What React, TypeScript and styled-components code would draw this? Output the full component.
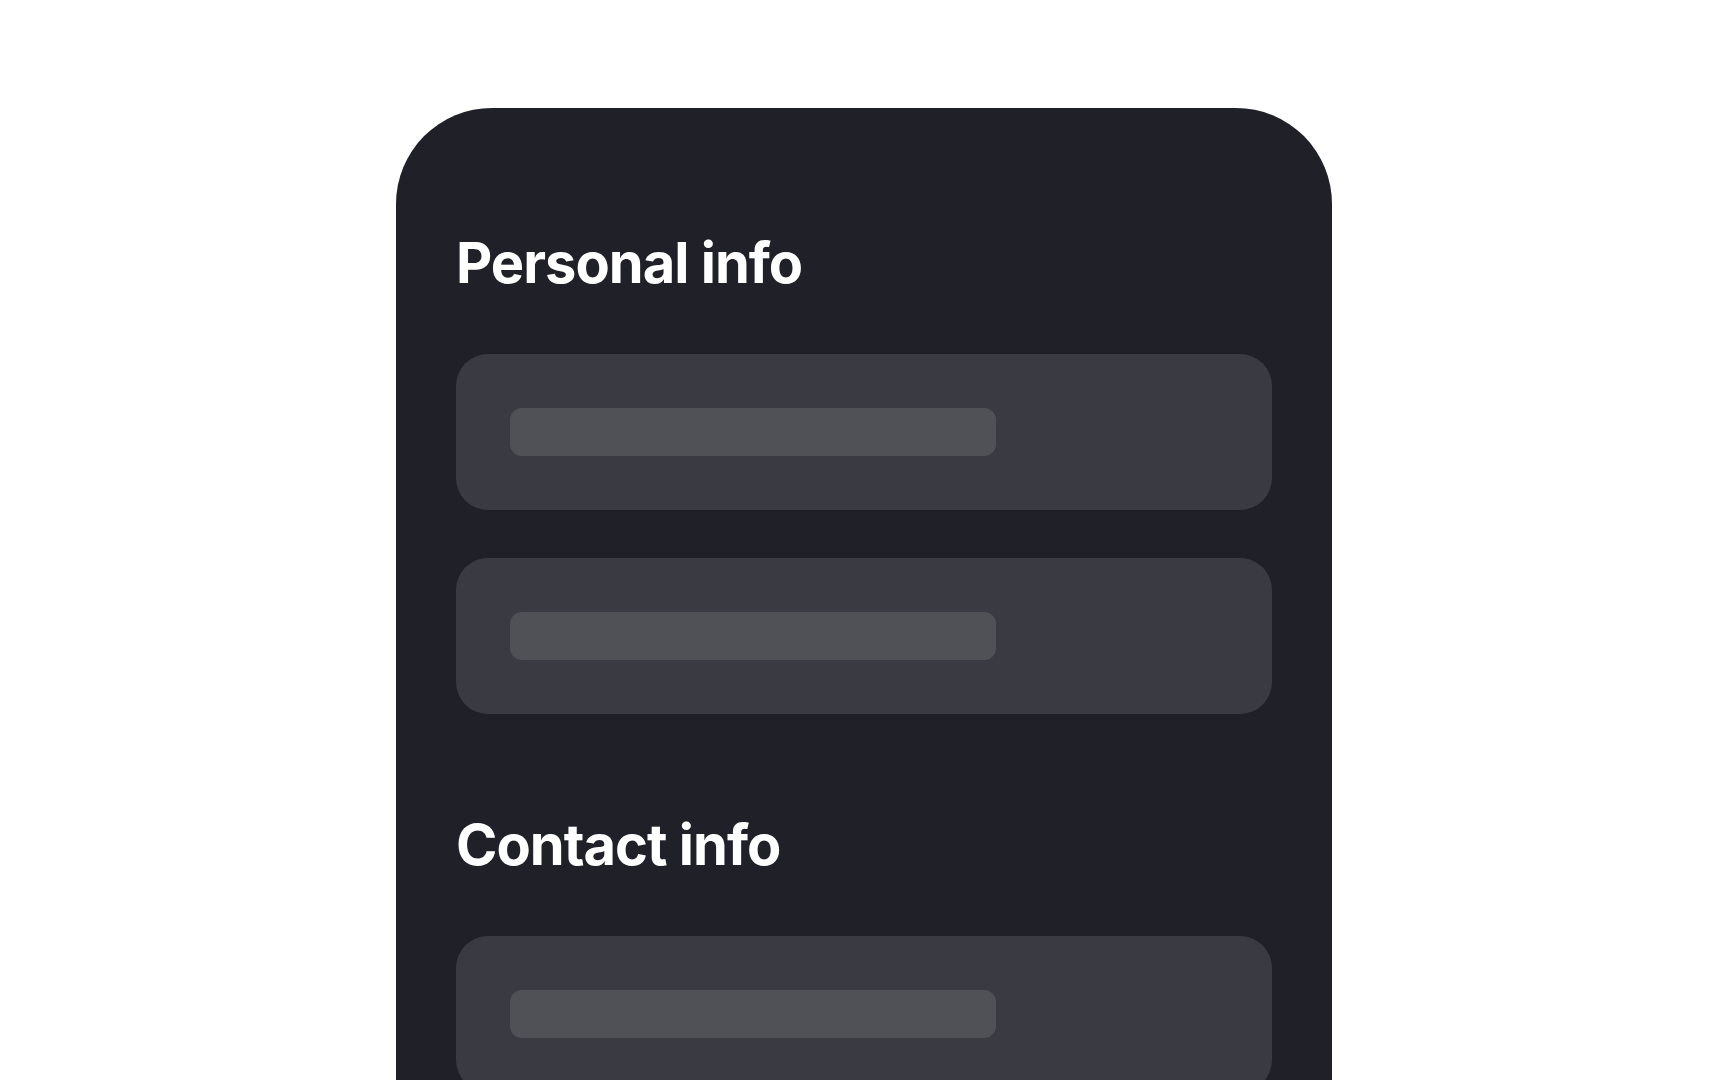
import styled, { createGlobalStyle } from "styled-components";

const GlobalStyle = createGlobalStyle`
  html, body {
    margin: 0;
    padding: 0;
    background: #ffffff;
    overflow: hidden;
    font-family: Inter, "Noto Sans", sans-serif;
  }
`;

const Page = styled.div`
  display: flex;
  justify-content: center;
  padding-top: 108px;
  min-height: 100vh;
  box-sizing: border-box;
`;

const Panel = styled.div`
  width: 936px;
  background-color: #1f2028;
  border-radius: 96px 96px 0 0;
  padding: 127px 60px 120px;
  box-sizing: border-box;
  display: flex;
  flex-direction: column;
  gap: 103px;
`;

const Section = styled.section`
  display: flex;
  flex-direction: column;
`;

const Heading = styled.h2`
  margin: 0 0 63px;
  font-size: 56px;
  line-height: 1;
  font-weight: 700;
  color: #ffffff;
  letter-spacing: -0.0175em;
`;

const Fields = styled.div`
  display: flex;
  flex-direction: column;
  gap: 48px;
`;

const Field = styled.div`
  height: 156px;
  background-color: #3a3a43;
  border-radius: 32px;
  padding: 54px;
  box-sizing: border-box;
`;

const Placeholder = styled.div<{ $width: number }>`
  width: ${(p) => p.$width}px;
  height: 48px;
  border-radius: 12px;
  background-color: #505157;
`;

const sections = [
  { title: "Personal info", fields: 2 },
  { title: "Contact info", fields: 1 },
];

const App = () => {
  return (
    <>
      <GlobalStyle />
      <Page>
        <Panel>
          {sections.map((s) => (
            <Section key={s.title}>
              <Heading>{s.title}</Heading>
              <Fields>
                {Array.from({ length: s.fields }).map((_, i) => (
                  <Field key={i}>
                    <Placeholder $width={486} />
                  </Field>
                ))}
              </Fields>
            </Section>
          ))}
        </Panel>
      </Page>
    </>
  );
};

export default App;
